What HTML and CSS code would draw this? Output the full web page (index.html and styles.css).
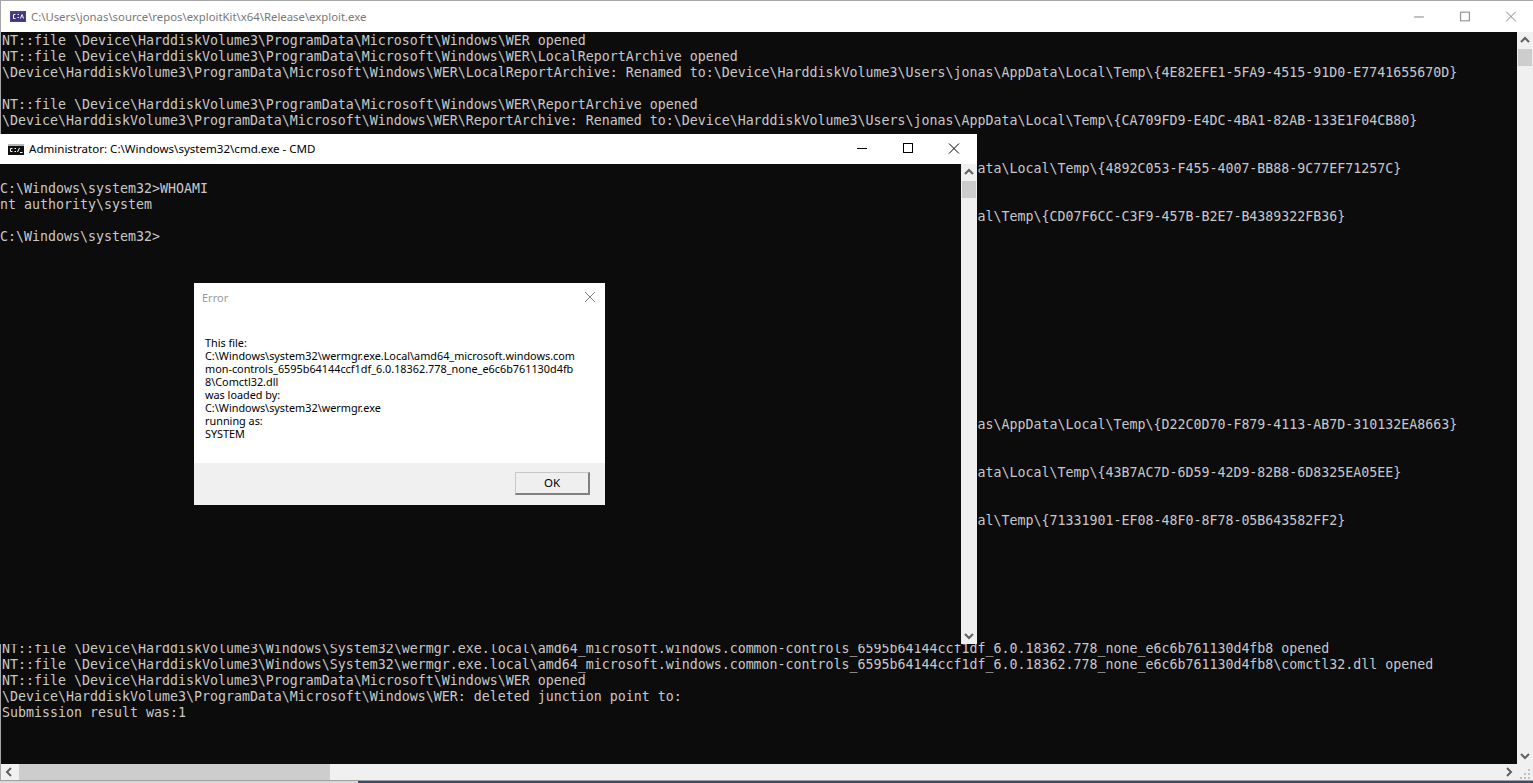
FILE: index.html
```html
<!DOCTYPE html>
<html lang="en">
<head>
<meta charset="utf-8">
<title>exploit.exe</title>
<link rel="stylesheet" href="styles.css">
</head>
<body>
<div class="desktop">
  <section class="win main">
    <header class="titlebar main-title">
      <svg class="icon-vs" viewBox="0 0 16 11" width="16" height="11"><rect width="16" height="11" fill="#4f3f93"/><rect x="1" y="2" width="14" height="8" fill="#433480"/><path d="M5.5 3.5H3.5v4h2M7.5 3.5h1.5M7.5 6.5h1.5M10.5 7.5l1.5-4 1.5 4" fill="none" stroke="#fff" stroke-width="1"/></svg>
      <span class="title-text muted">C:\Users\jonas\source\repos\exploitKit\x64\Release\exploit.exe</span>
      <div class="caption light">
        <svg class="cap" viewBox="0 0 46 32"><path d="M18 16.5h10"/></svg>
        <svg class="cap" viewBox="0 0 46 32"><rect x="18.5" y="11.5" width="9" height="9"/></svg>
        <svg class="cap" viewBox="0 0 46 32"><path d="M18 11l10 10M28 11l-10 10"/></svg>
      </div>
    </header>
    <div class="main-body">
      <div class="console-col">
<pre class="console">NT::file \Device\HarddiskVolume3\ProgramData\Microsoft\Windows\WER opened
NT::file \Device\HarddiskVolume3\ProgramData\Microsoft\Windows\WER\LocalReportArchive opened
\Device\HarddiskVolume3\ProgramData\Microsoft\Windows\WER\LocalReportArchive: Renamed to:\Device\HarddiskVolume3\Users\jonas\AppData\Local\Temp\{4E82EFE1-5FA9-4515-91D0-E7741655670D}

NT::file \Device\HarddiskVolume3\ProgramData\Microsoft\Windows\WER\ReportArchive opened
\Device\HarddiskVolume3\ProgramData\Microsoft\Windows\WER\ReportArchive: Renamed to:\Device\HarddiskVolume3\Users\jonas\AppData\Local\Temp\{CA709FD9-E4DC-4BA1-82AB-133E1F04CB80}


                                                                                                                          ata\Local\Temp\{4892C053-F455-4007-BB88-9C77EF71257C}


                                                                                                                          al\Temp\{CD07F6CC-C3F9-457B-B2E7-B4389322FB36}












                                                                                                                          as\AppData\Local\Temp\{D22C0D70-F879-4113-AB7D-310132EA8663}


                                                                                                                          ata\Local\Temp\{43B7AC7D-6D59-42D9-82B8-6D8325EA05EE}


                                                                                                                          al\Temp\{71331901-EF08-48F0-8F78-05B643582FF2}







NT::file \Device\HarddiskVolume3\Windows\System32\wermgr.exe.local\amd64_microsoft.windows.common-controls_6595b64144ccf1df_6.0.18362.778_none_e6c6b761130d4fb8 opened
NT::file \Device\HarddiskVolume3\Windows\System32\wermgr.exe.local\amd64_microsoft.windows.common-controls_6595b64144ccf1df_6.0.18362.778_none_e6c6b761130d4fb8\comctl32.dll opened
NT::file \Device\HarddiskVolume3\ProgramData\Microsoft\Windows\WER opened
\Device\HarddiskVolume3\ProgramData\Microsoft\Windows\WER: deleted junction point to:
Submission result was:1</pre>
        <div class="hscroll">
          <svg class="arrow" viewBox="0 0 16 16"><path d="M10 4L6 8l4 4"/></svg>
          <div class="hthumb"></div>
          <svg class="arrow" viewBox="0 0 16 16"><path d="M6 4l4 4-4 4"/></svg>
        </div>
      </div>
      <div class="vscroll main-v">
        <svg class="arrow" viewBox="0 0 16 16"><path d="M4 10l4-4 4 4"/></svg>
        <div class="vthumb"></div>
        <svg class="arrow end" viewBox="0 0 16 16"><path d="M4 6l4 4 4-4"/></svg>
        <svg class="grip" viewBox="0 0 16 16"><path d="M11 5h2v2h-2zM7 9h2v2H7zM11 9h2v2h-2zM3 13h2v2H3zM7 13h2v2H7zM11 13h2v2h-2z"/></svg>
      </div>
    </div>
  </section>
  <div class="under-strip"></div>

  <section class="win cmd">
    <header class="titlebar cmd-title">
      <svg class="icon-cmd" viewBox="0 0 16 11" width="16" height="11"><rect width="16" height="11" fill="#111"/><rect width="16" height="2" fill="#b5b5b5"/><path d="M4.5 4.5H2.5v3h2M6.5 4.5h1.5M6.5 7.5h1.5M9.5 8l2-4M12 8.5h2.5" fill="none" stroke="#fff"/></svg>
      <span class="title-text">Administrator: C:\Windows\system32\cmd.exe - CMD</span>
      <div class="caption dark">
        <svg class="cap" viewBox="0 0 46 30"><path d="M18 14.5h10"/></svg>
        <svg class="cap" viewBox="0 0 46 30"><rect x="18.5" y="9.5" width="9" height="9"/></svg>
        <svg class="cap" viewBox="0 0 46 30"><path d="M18 9.5l10 10M28 9.5l-10 10"/></svg>
      </div>
    </header>
    <div class="cmd-body">
<pre class="console cmd-console">

C:\Windows\system32&gt;WHOAMI
nt authority\system

C:\Windows\system32&gt;</pre>
      <div class="vscroll cmd-v">
        <svg class="arrow" viewBox="0 0 16 16"><path d="M4 10l4-4 4 4"/></svg>
        <div class="vthumb"></div>
        <svg class="arrow end" viewBox="0 0 16 16"><path d="M4 6l4 4 4-4"/></svg>
      </div>
    </div>
  </section>

  <section class="win dialog">
    <header class="dialog-title">
      <span>Error</span>
      <svg class="dialog-x" viewBox="0 0 12 12" width="12" height="12"><path d="M1 1l10 10M11 1L1 11"/></svg>
    </header>
    <div class="dialog-body">This file:
C:\Windows\system32\wermgr.exe.Local\amd64_microsoft.windows.com
mon-controls_6595b64144ccf1df_6.0.18362.778_none_e6c6b761130d4fb
8\Comctl32.dll
was loaded by:
C:\Windows\system32\wermgr.exe
running as:
SYSTEM</div>
    <footer class="dialog-foot"><button class="ok">OK</button></footer>
  </section>
</div>
</body>
</html>
```

FILE: styles.css
```css
* { box-sizing: border-box; }
html, body { margin: 0; height: 100%; overflow: hidden; background: #3b4a6b; }
.desktop { position: relative; width: 1533px; height: 783px; overflow: hidden; }
.win { position: absolute; display: flex; flex-direction: column; }
.main { left: 0; top: 0; width: 1533px; height: 781px; background: #fff; border-top: 1px solid #a6a6a6; border-left: 1px solid #a6a6a6; border-bottom: 1px solid #a0a0a0; }
.under-strip { position: absolute; left: 0; bottom: 0; width: 358px; height: 2px; background: #d8d8d8; }
.titlebar { display: flex; align-items: center; background: #fff; flex: none; }
.main-title { height: 31px; padding-left: 9px; }
.cmd-title { height: 30px; padding-left: 8px; }
.icon-vs { margin-right: 5px; }
.icon-cmd { margin-right: 5px; }
.title-text { font: 11.55px "Noto Sans", sans-serif; color: #000; white-space: pre; }
.cmd-title .title-text { margin-bottom: 2px; }
.title-text.muted { font-size: 11.33px; color: #777; }
.caption { margin-left: auto; display: flex; }
.cap { width: 46px; height: 30px; fill: none; stroke-width: 1; }
.caption.light .cap { stroke: #808080; height: 31px; }
.caption.dark .cap { stroke: #000; }
.main-title .caption { margin-right: -1px; }
.main-body { flex: 1; display: flex; min-height: 0; }
.console-col { flex: 1; min-width: 0; display: flex; flex-direction: column; }
.console { flex: 1; min-height: 0; margin: 0; padding: 1px 0 0 1px; overflow: hidden; background: #0c0c0c; color: #c8c8c8; font: 13.29px/16px "DejaVu Sans Mono", monospace; white-space: pre; }
.hscroll { flex: none; height: 16px; background: #f0f0f0; display: flex; align-items: center; }
.hthumb { width: 311px; height: 16px; background: #cdcdcd; margin-left: 2px; }
.hscroll .arrow:last-child { margin-left: auto; }
.arrow { width: 16px; height: 16px; flex: none; fill: none; stroke: #606060; stroke-width: 2; }
.vscroll { flex: none; width: 16px; background: #f0f0f0; display: flex; flex-direction: column; align-items: center; }
.vthumb { width: 14px; height: 17px; background: #cdcdcd; margin-top: 1px; }
.arrow.end { margin-top: auto; }
.grip { width: 16px; height: 16px; flex: none; fill: #c0c0c0; }
.cmd { left: 0; top: 134px; width: 977px; height: 510px; background: #fff; }
.cmd-body { flex: 1; display: flex; min-height: 0; }
.cmd-console { padding-left: 0; }
.dialog { left: 194px; top: 283px; width: 411px; height: 222px; background: #fff; }
.dialog-title { height: 30px; flex: none; display: flex; align-items: center; justify-content: space-between; padding: 0 9px 2px 8px; font: 11px "Noto Sans", sans-serif; color: #9a9a9a; }
.dialog-x { fill: none; stroke: #808080; stroke-width: 1; }
.dialog-body { flex: 1; padding: 23px 11px 0; font: 10.85px/13px "Noto Sans", sans-serif; color: #000; white-space: pre; }
.dialog-foot { height: 42px; flex: none; background: #f0f0f0; display: flex; justify-content: flex-end; align-items: center; padding: 0 15px 2px 0; }
.ok { width: 75px; height: 23px; padding: 0; background: #efefef; border: 1px solid #c8c8c8; border-right: 2px solid #808080; border-bottom: 2px solid #808080; font: 11.5px "Noto Sans", sans-serif; color: #000; }
```
